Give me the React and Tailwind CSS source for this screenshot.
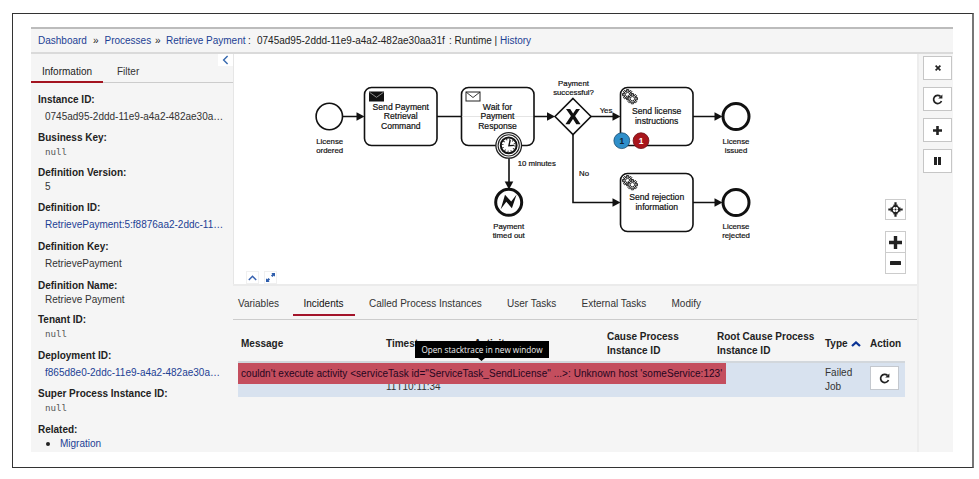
import React from "react";

const DETAILS = [
  { label: "Instance ID:", value: "0745ad95-2ddd-11e9-a4a2-482ae30a…", h: "h-[38px]", gap: "mt-[3px]" },
  { label: "Business Key:", value: "null", mono: true, h: "h-[35px]" },
  { label: "Definition Version:", value: "5", h: "h-[35.5px]" },
  { label: "Definition ID:", value: "RetrievePayment:5:f8876aa2-2ddc-11…", link: true, h: "h-[39px]", gap: "mt-[3px]" },
  { label: "Definition Key:", value: "RetrievePayment", h: "h-[38.5px]", gap: "mt-[3px]" },
  { label: "Definition Name:", value: "Retrieve Payment", h: "h-[34.5px]" },
  { label: "Tenant ID:", value: "null", mono: true, h: "h-[36px]" },
  { label: "Deployment ID:", value: "f865d8e0-2ddc-11e9-a4a2-482ae30a…", link: true, h: "h-[38px]", gap: "mt-[3px]" },
  { label: "Super Process Instance ID:", value: "null", mono: true, h: "h-[35.5px]" },
];

function Breadcrumb() {
  return (
    <header className="flex h-[27px] shrink-0 items-center whitespace-pre border-t-2 border-b-2 border-t-[#bcbcbc] border-b-[#dadada] bg-[#f5f5f5] pl-[7px] text-[#222]">
      <a className="w-[55px] text-[#1c4194]">Dashboard</a>
      <span className="w-[11.5px]">»</span>
      <a className="w-[50.5px] text-[#1c4194]">Processes</a>
      <span className="w-[11px]">»</span>
      <a className="w-[82px] text-[#1c4194]">Retrieve Payment</a>
      <span className="w-[9px]">:</span>
      <span className="w-[192px]">0745ad95-2ddd-11e9-a4a2-482ae30aa31f</span>
      <span>: Runtime | </span>
      <a className="text-[#1c4194]">History</a>
    </header>
  );
}

function Sidebar() {
  return (
    <aside className="relative flex w-[202px] shrink-0 flex-col bg-[#f5f5f5]">
      <nav className="flex h-[29px] shrink-0 border-b border-[#ccc]">
        <span className="flex h-[29px] w-[72px] items-center border-b-2 border-[#a31420] pl-[11px] pt-[8px] text-[#222]">Information</span>
        <span className="flex items-center pl-[14px] pt-[6px] text-[#333]">Filter</span>
      </nav>
      <div className="absolute top-0 right-0 flex h-[12px] w-[15px] items-center justify-center bg-white">
        <svg width="7" height="10" viewBox="0 0 7 10"><path d="M5.6 1 1.6 5l4 4" fill="none" stroke="#3568ae" strokeWidth="1.4" /></svg>
      </div>
      <dl className="flex flex-col pt-[9.5px] pl-[7px] leading-[14px]">
        {DETAILS.map((d) => (
          <div key={d.label} className={d.h}>
            <dt className="font-bold text-[#222]">{d.label}</dt>
            <dd className={`${d.gap || ""} whitespace-nowrap pl-[7px] ${d.link ? "text-[#1c4194]" : "text-[#333]"} ${d.mono ? "font-['DejaVu_Sans_Mono',monospace] text-[9.2px] text-[#555]" : ""}`}>
              {d.value}
            </dd>
          </div>
        ))}
        <div>
          <dt className="font-bold text-[#222]">Related:</dt>
          <dd className="flex items-center pl-[7px]">
            <span className="ml-[1px] mr-[10px] h-[4px] w-[4px] rounded-full bg-[#222]" />
            <a className="text-[#1c4194]">Migration</a>
          </dd>
        </div>
      </dl>
    </aside>
  );
}

function Lines({ x, y, step, size, lines }) {
  return (
    <text fontSize={size} textAnchor="middle" fill="#111" stroke="#111" strokeWidth="0.2">
      {lines.map((l, i) => (
        <tspan key={l} x={x} y={y + i * step}>{l}</tspan>
      ))}
    </text>
  );
}

function Gear({ x, y }) {
  const teeth = [0, 45, 90, 135, 180, 225, 270, 315];
  return (
    <g transform={`translate(${x} ${y})`} stroke="#1a1a1a" fill="#fff">
      {teeth.map((a) => (
        <path key={a} d="M-1.1-3.500v-1.600h2.200v1.600" transform={`rotate(${a})`} strokeWidth=".9" />
      ))}
      <circle r="3.700" strokeWidth="1" />
      <circle r="2.200" strokeWidth=".9" />
    </g>
  );
}

function Arrow({ x, y, down }) {
  return <path d="M0 0l-8-4.3v8.6z" fill="#111" transform={`translate(${x} ${y}) rotate(${down ? 90 : 0})`} />;
}

function Diagram() {
  return (
    <svg width="684" height="230" viewBox="233 54 684 230" className="block font-['Liberation_Sans',Arial,sans-serif]">
      <g fill="none" stroke="#111" strokeWidth="1.6">
        <path d="M343 116.5h16M437 116.5h24M534 116.5h16M591 116.5h23M693 116.5h23M573 134v68.5h42M693 202.5h23M509 157v25" />
        <rect x="364.5" y="87.5" width="72.5" height="58" rx="7" />
        <rect x="461.5" y="87.5" width="72.5" height="58" rx="7" />
        <rect x="620.5" y="87.5" width="72.5" height="58" rx="7" />
        <rect x="620.5" y="173.5" width="72.5" height="58" rx="7" />
        <circle cx="329.3" cy="116.5" r="13.2" />
        <path d="M573 98.5l18 18-18 18-18-18z" />
      </g>
      <path d="M462 116.5h71" stroke="#ddd" strokeWidth=".8" />
      <g fill="none" stroke="#111" strokeWidth="3">
        <circle cx="736" cy="116.5" r="13" />
        <circle cx="736" cy="202.5" r="13" />
        <circle cx="508.7" cy="202.3" r="13" />
      </g>
      <Arrow x={364.5} y={116.5} />
      <Arrow x={555} y={116.5} />
      <Arrow x={620.5} y={116.5} />
      <Arrow x={722.5} y={116.5} />
      <Arrow x={620.5} y={202.5} />
      <Arrow x={722.5} y={202.5} />
      <Arrow x={509} y={189.5} down />

      <rect x="369" y="91.5" width="15" height="10" fill="#111" />
      <path d="M369.5 92.3l7 5 7-5" fill="none" stroke="#aaa" strokeWidth=".8" />
      <rect x="466" y="92" width="14" height="9" fill="#fff" stroke="#222" strokeWidth="1" />
      <path d="M466 92l7 5.5 7-5.5" fill="none" stroke="#222" strokeWidth=".9" />

      <path d="M566 109h4.200l2.900 4.400 3-4.400h3.900l-4.900 7.100 5.500 8.100h-4.300l-3.300-5.100-3.500 5.100h-4.100l5.500-8.100z" fill="#111" />

      <circle cx="508.7" cy="145.4" r="12.8" fill="#fff" stroke="#222" strokeWidth="1.3" />
      <circle cx="508.7" cy="145.4" r="10.6" fill="#fff" stroke="#222" strokeWidth="1.1" />
      <circle cx="508.7" cy="145.4" r="7.900" fill="#fff" stroke="#111" strokeWidth="2" />
      <circle cx="508.7" cy="145.4" r="6.1" fill="none" stroke="#222" strokeWidth="1.8" strokeDasharray=".9 2.294" />
      <path d="M510.200 140l-1.300 5.700 5-.3" fill="none" stroke="#111" strokeWidth="1.4" />
      <path d="M500.700 209.200l4.300-14.400 6.200 6.800 5.400-7.200-4.700 13.800-5.600-6.500z" fill="#111" />

      <Gear x={627.6} y={94.6} />
      <Gear x={632.4} y={98.700} />
      <Gear x={627.6} y={180.6} />
      <Gear x={632.4} y={184.700} />

      <Lines x={400.8} y={109.5} step={9.7} size={8.6} lines={["Send Payment", "Retrieval", "Command"]} />
      <Lines x={497.5} y={109.5} step={9.7} size={8.6} lines={["Wait for", "Payment", "Response"]} />
      <Lines x={656.7} y={114.2} step={9.8} size={8.6} lines={["Send license", "instructions"]} />
      <Lines x={656.7} y={200} step={9.8} size={8.6} lines={["Send rejection", "information"]} />
      <Lines x={329.7} y={143.7} step={9} size={7.8} lines={["License", "ordered"]} />
      <Lines x={736} y={143.7} step={9} size={7.8} lines={["License", "issued"]} />
      <Lines x={736} y={229.3} step={9} size={7.8} lines={["License", "rejected"]} />
      <Lines x={508.7} y={229.3} step={9} size={7.8} lines={["Payment", "timed out"]} />
      <Lines x={573.5} y={86} step={9} size={7.8} lines={["Payment", "successful?"]} />
      <Lines x={606} y={112.8} step={9} size={7.8} lines={["Yes"]} />
      <Lines x={584} y={175.7} step={9} size={7.8} lines={["No"]} />
      <Lines x={536.8} y={165.8} step={9} size={7.8} lines={["10 minutes"]} />

      <circle cx="621.8" cy="140.7" r="7.9" fill="#2f8fca" stroke="#1d4e70" strokeWidth=".8" />
      <circle cx="641" cy="140.7" r="7.9" fill="#a8151b" stroke="#6e1116" strokeWidth=".8" />
      <text x="621.8" y="143.7" fontSize="8.5" fontWeight="bold" textAnchor="middle" fill="#123">1</text>
      <text x="641" y="143.7" fontSize="8.5" fontWeight="bold" textAnchor="middle" fill="#fff">1</text>
    </svg>
  );
}

function DiagramControls() {
  return (
    <>
      <div className="absolute bottom-0 left-[13px] flex gap-[5px]">
        <span className="flex h-[13px] w-[13px] items-center justify-center border border-[#f0f0f0] bg-white">
          <svg width="9" height="6" viewBox="0 0 9 6"><path d="M.8 5 4.500 1.300 8.200 5" fill="none" stroke="#3762b0" strokeWidth="1.5" /></svg>
        </span>
        <span className="flex h-[13px] w-[13px] items-center justify-center border border-[#f0f0f0] bg-white">
          <svg width="11" height="11" viewBox="0 0 11 11">
            <path d="M6.300 1H10v3.700zM1 6.300V10h3.700z" fill="#2d5cab" />
            <path d="M9 2 6.700 4.300M2 9l2.300-2.300" stroke="#2d5cab" strokeWidth="2" />
          </svg>
        </span>
      </div>
      <div className="absolute top-[145px] right-[11px] flex w-[21px] flex-col">
        <span className="flex h-[21px] items-center justify-center border border-[#ccc] bg-white">
          <svg width="15" height="15" viewBox="0 0 15 15" fill="#222">
            <circle cx="7.500" cy="7.500" r="3.500" fill="none" stroke="#222" strokeWidth="1.500" />
            <circle cx="7.500" cy="7.500" r="1" />
            <path d="M6.400.3h2.200v2.400h1.600L7.500 5.700 4.800 2.700h1.600zM6.400 14.700h2.200v-2.400h1.600L7.500 9.300l-2.700 3h1.600zM.3 6.400v2.200h2.400v1.600l3-2.700-3-2.700v1.600zM14.700 6.400v2.200h-2.400v1.600l-3-2.700 3-2.700v1.600z" />
          </svg>
        </span>
        <span className="mt-[11px] flex h-[22px] items-center justify-center border border-[#ccc] bg-white">
          <svg width="13" height="13" viewBox="0 0 13 13"><path d="M6.500 0v13M0 6.500h13" stroke="#222" strokeWidth="3.400" /></svg>
        </span>
        <span className="flex h-[21px] items-center justify-center border border-t-0 border-[#ccc] bg-white">
          <svg width="11" height="4" viewBox="0 0 11 4"><rect width="11" height="4" rx=".5" fill="#222" /></svg>
        </span>
      </div>
    </>
  );
}

function Repeat() {
  return (
    <svg width="11" height="11" viewBox="0 0 11 11">
      <path d="M8.500 2.400A4.100 4.100 0 1 0 9.500 7" fill="none" stroke="#222" strokeWidth="1.700" />
      <path d="M10.400.4v4.200H6.200z" fill="#222" />
    </svg>
  );
}

function Incidents() {
  return (
    <section className="flex min-h-0 flex-1 flex-col border-t-2 border-[#ebebeb] bg-[#f5f5f5]">
      <nav className="flex h-[34px] shrink-0 whitespace-nowrap border-b border-[#ccc] pl-[5px] leading-[36px] text-[#333]">
        <span className="w-[55px]">Variables</span>
        <span className="h-[30px] w-[62px] border-b-2 border-[#a3142a] pl-[10.5px] text-[#111]">Incidents</span>
        <span className="w-[152px] pl-[14px]">Called Process Instances</span>
        <span className="w-[74.5px]">User Tasks</span>
        <span className="w-[90px]">External Tasks</span>
        <span>Modify</span>
      </nav>
      <div className="relative mr-[12px] ml-[5px] flex flex-col leading-[14px]">
        <div className="flex h-[43px] items-center border-b-2 border-[#d2d7dc] pt-[7px] pl-[3px] font-bold text-[#222]">
          <span className="w-[145px]">Message</span>
          <span className="w-[88px]">Timestamp</span>
          <span className="w-[133px] pb-[1px]">Activity</span>
          <span className="w-[110px]">Cause Process<br />Instance ID</span>
          <span className="w-[108px]">Root Cause Process<br />Instance ID</span>
          <span className="flex w-[45px] items-center gap-[3px]">
            Type
            <svg width="10" height="6" viewBox="0 0 10 6"><path d="M1 5 5 1.500 9 5" fill="none" stroke="#0b3395" strokeWidth="2.300" /></svg>
          </span>
          <span>Action</span>
        </div>
        <div className="flex h-[34px] items-start bg-[#d8e2ef] pl-[3px] text-[#333]">
          <span className="w-[145px]" />
          <span className="w-[439px] pt-[17px]">11T10:11:34</span>
          <span className="w-[45px] pt-[3px]">Failed<br />Job</span>
          <span className="mt-[3px] flex h-[24px] w-[29px] items-center justify-center border border-[#c4c8ce] bg-white"><Repeat /></span>
        </div>
        <div className="absolute top-[43px] left-0 h-[21px] w-[488px] whitespace-nowrap bg-[#c44e5e] pl-[3px] leading-[22px] tracking-[0.043px] text-[#26061f]">
          couldn't execute activity &lt;serviceTask id="ServiceTask_SendLicense" ...&gt;: Unknown host 'someService:123'
        </div>
        <div className="absolute top-[21px] left-[177px] flex h-[17px] w-[134px] items-center justify-center whitespace-nowrap bg-black font-['Open_Sans',sans-serif] text-[8.2px] text-[#f2f2f2]">
          Open stacktrace in new window
          <svg className="absolute top-[17px] left-[63px]" width="7" height="3" viewBox="0 0 7 3"><path d="M0 0h7L3.500 3z" /></svg>
        </div>
      </div>
    </section>
  );
}

function Actions() {
  const box = "flex h-[24px] w-[29px] items-center justify-center border border-[#c6c6c6] bg-white";
  return (
    <aside className="flex w-[36px] shrink-0 flex-col items-end gap-[7px] border-l-2 border-[#ededed] bg-[#f5f5f5] pt-[2px] pr-[1px]">
      <span className={box}><svg width="6" height="6" viewBox="0 0 6 6"><path d="M.6.6l4.800 4.800m0-4.800L.6 5.400" stroke="#222" strokeWidth="1.700" /></svg></span>
      <span className={box}><Repeat /></span>
      <span className={box}><svg width="9" height="9" viewBox="0 0 9 9"><path d="M4.500 0v9M0 4.500h9" stroke="#222" strokeWidth="2.600" /></svg></span>
      <span className={box}><svg width="7" height="8" viewBox="0 0 7 8"><path d="M0 0h3v8H0zM4 0h3v8H4z" fill="#222" /></svg></span>
    </aside>
  );
}

export default function App() {
  return (
    <div className="h-[479px] w-[979px] bg-white pt-[13px] pl-[12px] font-['Liberation_Sans',Arial,sans-serif] text-[10px]">
      <div className="flex h-[455px] w-[962px] border border-r-2 border-[#333] border-r-[#777] pt-[13px] pl-[18px]">
        <div className="flex h-[425px] w-[922px] flex-col">
          <Breadcrumb />
          <div className="flex min-h-0 flex-1">
            <Sidebar />
            <main className="flex w-[684px] flex-col border-l border-[#e6e6e6]">
              <div className="relative -ml-px h-[230px] w-[684px] shrink-0">
                <Diagram />
                <DiagramControls />
              </div>
              <div className="-ml-px flex min-h-0 flex-1 flex-col"><Incidents /></div>
            </main>
            <Actions />
          </div>
        </div>
      </div>
    </div>
  );
}
